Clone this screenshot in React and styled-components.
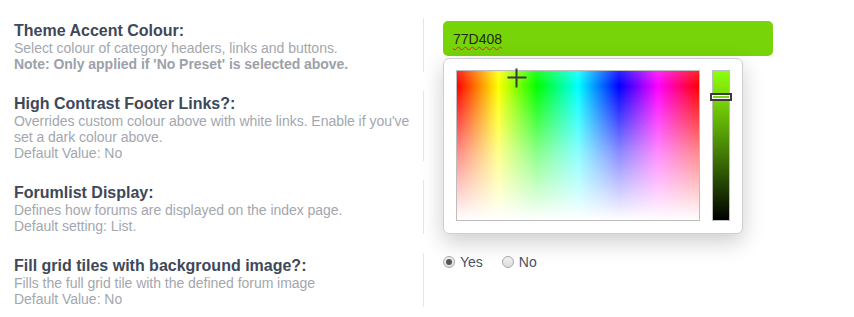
import React from 'react';
import styled, { createGlobalStyle } from 'styled-components';

const GlobalStyle = createGlobalStyle`
    html, body {
        margin: 0;
        padding: 0;
        background: #fff;
    }
    body {
        font-family: "Liberation Sans", Arial, sans-serif;
    }
`;

const Page = styled.div`
    position: relative;
    width: 854px;
    height: 317px;
    padding: 18px 0 0 13px;
    box-sizing: border-box;
    display: flex;
    flex-direction: column;
    gap: 19px;
    overflow: hidden;
`;

const Row = styled.div`
    display: grid;
    grid-template-columns: 410px 1fr;
`;

const Label = styled.div`
    padding: 4px 0 0 1px;
`;

const Title = styled.div`
    font-weight: 700;
    font-size: 16px;
    line-height: 18px;
    color: #3e4859;
`;

const Desc = styled.div`
    font-size: 14px;
    line-height: 16px;
    color: #a3a7ae;
    letter-spacing: -0.03px;
`;

const Note = styled.span`
    font-weight: 700;
    color: #9ca1a9;
`;

const Field = styled.div`
    border-left: 1px solid #e6e6e6;
    padding: ${p => p.$pad || '3px 0 0 19px'};
`;

const ColourInput = styled.div`
    width: 330px;
    height: 35px;
    box-sizing: border-box;
    background: #77d408;
    border-radius: 5px;
    padding: 0 10px;
    display: flex;
    align-items: center;
    font-size: 14px;
    color: #1e2a10;
`;

const Spelled = styled.span`
    text-decoration: underline wavy #d0302b;
    text-decoration-thickness: 1px;
    text-underline-offset: 2px;
`;

const Picker = styled.div`
    position: absolute;
    left: 443px;
    top: 58px;
    width: 300px;
    height: 176px;
    box-sizing: border-box;
    background: #fff;
    border: 1px solid #cfcfcf;
    border-radius: 6px;
    box-shadow: 0 8px 22px rgba(0, 0, 0, 0.2);
    padding: 11px 12px 12px 12px;
    display: flex;
    gap: 12px;
`;

const Spectrum = styled.div`
    position: relative;
    width: 244px;
    height: 151px;
    box-sizing: border-box;
    border: 1px solid #bdbdbd;
    background:
        linear-gradient(to bottom, rgba(255, 255, 255, 0.15) 0%, rgba(255, 255, 255, 0) 10%, rgba(255, 255, 255, 0.55) 55%, #fff 100%),
        linear-gradient(to right, #f00 0%, #ff0 17%, #0f0 33%, #0ff 50%, #00f 67%, #f0f 83%, #f00 100%);
`;

const Cross = styled.div`
    position: absolute;
    left: ${p => p.$x}px;
    top: ${p => p.$y}px;
    width: 19px;
    height: 19px;
    transform: translate(-50%, -50%);
    &::before, &::after {
        content: "";
        position: absolute;
        background: #3a3a3a;
    }
    &::before {
        left: 8px;
        top: 0;
        width: 2px;
        height: 19px;
    }
    &::after {
        left: 0;
        top: 8px;
        width: 19px;
        height: 2px;
    }
`;

const HueBar = styled.div`
    position: relative;
    width: 18px;
    height: 151px;
    box-sizing: border-box;
    border: 1px solid #bdbdbd;
    background: linear-gradient(to bottom, #8cff10 0%, #77d408 20%, #4a8a05 50%, #203d02 78%, #000 100%);
`;

const Handle = styled.div`
    position: absolute;
    left: -3px;
    top: ${p => p.$y}px;
    width: 22px;
    height: 8px;
    box-sizing: border-box;
    border: 2px solid #3a3a3a;
    background: #7ccf12;
    box-shadow: inset 0 0 0 1px #fff;
`;

const Options = styled.div`
    display: flex;
    align-items: center;
    gap: 19px;
`;

const Option = styled.label`
    display: flex;
    align-items: center;
    gap: 5px;
    font-size: 14px;
    color: #4a5161;
`;

const Radio = styled.span`
    width: 12px;
    height: 12px;
    box-sizing: border-box;
    border-radius: 50%;
    border: 1px solid #a9a9a9;
    background: linear-gradient(#f4f4f4, #dcdcdc);
    display: flex;
    align-items: center;
    justify-content: center;
    &::after {
        content: "";
        display: ${p => (p.$checked ? 'block' : 'none')};
        width: 6px;
        height: 6px;
        border-radius: 50%;
        background: #555;
    }
`;

function App() {
    return (
        <>
            <GlobalStyle />
            <Page>
                <Row>
                    <Label>
                        <Title>Theme Accent Colour:</Title>
                        <Desc>Select colour of category headers, links and buttons.</Desc>
                        <Desc><Note>Note: Only applied if 'No Preset' is selected above.</Note></Desc>
                    </Label>
                    <Field>
                        <ColourInput><Spelled>77D408</Spelled></ColourInput>
                    </Field>
                </Row>
                <Row>
                    <Label>
                        <Title>High Contrast Footer Links?:</Title>
                        <Desc>Overrides custom colour above with white links. Enable if you've set a dark colour above.</Desc>
                        <Desc>Default Value: No</Desc>
                    </Label>
                    <Field />
                </Row>
                <Row>
                    <Label>
                        <Title>Forumlist Display:</Title>
                        <Desc>Defines how forums are displayed on the index page.</Desc>
                        <Desc>Default setting: List.</Desc>
                    </Label>
                    <Field />
                </Row>
                <Row>
                    <Label>
                        <Title>Fill grid tiles with background image?:</Title>
                        <Desc>Fills the full grid tile with the defined forum image</Desc>
                        <Desc>Default Value: No</Desc>
                    </Label>
                    <Field $pad="1px 0 0 19px">
                        <Options>
                            <Option><Radio $checked />Yes</Option>
                            <Option><Radio />No</Option>
                        </Options>
                    </Field>
                </Row>
                <Picker>
                    <Spectrum>
                        <Cross $x={60} $y={7} />
                    </Spectrum>
                    <HueBar>
                        <Handle $y={22} />
                    </HueBar>
                </Picker>
            </Page>
        </>
    );
}

export default App;
